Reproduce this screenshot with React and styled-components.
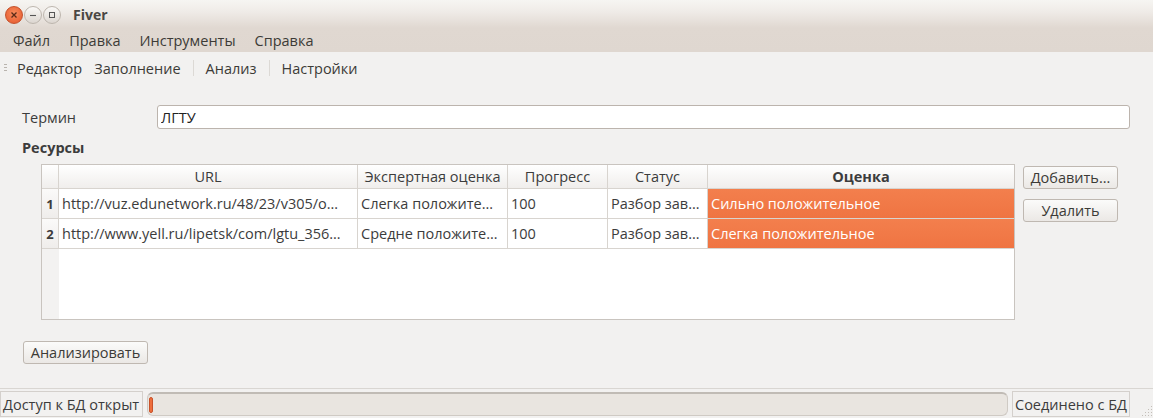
import React from 'react';
import styled, { createGlobalStyle } from 'styled-components';

const GlobalStyle = createGlobalStyle`
  html, body { margin: 0; padding: 0; background: #f2f1f0; }
  body { font-family: 'Open Sans', 'DejaVu Sans', sans-serif; font-size: 14.5px; color: #3c3c3c; }
`;

const columns = [
    { title: 'URL' },
    { title: 'Экспертная оценка' },
    { title: 'Прогресс' },
    { title: 'Статус' },
    { title: 'Оценка', bold: true },
];

const rows = [
    ['http://vuz.edunetwork.ru/48/23/v305/o…', 'Слегка положите…', '100', 'Разбор зав…', 'Сильно положительное'],
    ['http://www.yell.ru/lipetsk/com/lgtu_356…', 'Средне положите…', '100', 'Разбор зав…', 'Слегка положительное'],
];

// dots of the window size grip, a triangle in the corner
const gripDots = [[10, 1], [7, 4], [10, 4], [4, 7], [7, 7], [10, 7], [1, 10], [4, 10], [7, 10], [10, 10]];

const App = () => {
    return (
        <Window>
            <GlobalStyle />
            <Header>
                <TitleBar>
                    <WinButtons>
                        <WinButton $close>
                            <svg width="8" height="8" viewBox="0 0 8 8">
                                <path d="M1.5 1.5 L6.5 6.5 M6.5 1.5 L1.5 6.5" stroke="#5a2a18" strokeWidth="1.3" />
                            </svg>
                        </WinButton>
                        <WinButton>
                            <svg width="8" height="8" viewBox="0 0 8 8">
                                <path d="M1 4.5 H7" stroke="#555" strokeWidth="1.1" />
                            </svg>
                        </WinButton>
                        <WinButton>
                            <svg width="8" height="8" viewBox="0 0 8 8">
                                <rect x="1.5" y="1.5" width="5" height="5" fill="none" stroke="#555" strokeWidth="1" />
                            </svg>
                        </WinButton>
                    </WinButtons>
                    <Title>Fiver</Title>
                </TitleBar>
                <MenuBar>
                    <MenuItem>Файл</MenuItem>
                    <MenuItem>Правка</MenuItem>
                    <MenuItem>Инструменты</MenuItem>
                    <MenuItem>Справка</MenuItem>
                </MenuBar>
            </Header>
            <ToolBar>
                <Grip />
                <Tab>Редактор</Tab>
                <Tab>Заполнение</Tab>
                <ToolSep />
                <Tab>Анализ</Tab>
                <ToolSep />
                <Tab>Настройки</Tab>
            </ToolBar>
            <Content>
                <FormRow>
                    <Label>Термин</Label>
                    <Input defaultValue="ЛГТУ" />
                </FormRow>
                <SectionTitle>Ресурсы</SectionTitle>
                <ResourcesRow>
                    <Table>
                        <HeadCell />
                        {columns.map(c => (
                            <HeadCell key={c.title} $bold={c.bold}>{c.title}</HeadCell>
                        ))}
                        {rows.map((r, i) => (
                            <React.Fragment key={i}>
                                <RowNum>{i + 1}</RowNum>
                                {r.map((v, j) => (
                                    <Cell key={j} $hot={j === 4}>{v}</Cell>
                                ))}
                            </React.Fragment>
                        ))}
                        <FillerNum />
                        <Filler />
                    </Table>
                    <ButtonColumn>
                        <Button>Добавить...</Button>
                        <Button>Удалить</Button>
                    </ButtonColumn>
                </ResourcesRow>
                <AnalyzeRow>
                    <Button $wide>Анализировать</Button>
                </AnalyzeRow>
            </Content>
            <StatusBar>
                <StatusLabel $w={143}>Доступ к БД открыт</StatusLabel>
                <Progress>
                    <Chunk />
                </Progress>
                <StatusLabel $w={118}>Соединено с БД</StatusLabel>
                <SizeGrip>
                    <svg width="12" height="12" viewBox="0 0 12 12">
                        {gripDots.map(([x, y]) => (
                            <rect key={x + '-' + y} x={x} y={y} width="1" height="1" fill="#c3beb8" />
                        ))}
                    </svg>
                </SizeGrip>
            </StatusBar>
        </Window>
    );
};

const Window = styled.div`
    width: 1153px;
    height: 418px;
    display: flex;
    flex-direction: column;
    background: #f2f1f0;
    overflow: hidden;
`;

const Header = styled.div`
    height: 52px;
    display: flex;
    flex-direction: column;
    background: linear-gradient(to bottom, #f6f5f2 0px, #efebe7 12px, #e0d8d1 28px, #dfd7d0 52px);
`;

const TitleBar = styled.div`
    height: 29px;
    display: flex;
    align-items: center;
    padding-left: 5px;
`;

const WinButtons = styled.div`
    display: flex;
    gap: 1px;
    width: 68px;
`;

const WinButton = styled.div`
    width: 18px;
    height: 18px;
    border-radius: 50%;
    display: flex;
    align-items: center;
    justify-content: center;
    box-sizing: border-box;
    background: ${p => p.$close
        ? 'radial-gradient(circle at 50% 40%, #f78c5c, #e5552a)'
        : 'linear-gradient(to bottom, #faf9f7, #dcd6d0)'};
    border: 1px solid ${p => p.$close ? '#c4502a' : '#bdb6ae'};
`;

const Title = styled.div`
    font-weight: bold;
    font-size: 14px;
    color: #4a4743;
`;

const MenuBar = styled.div`
    height: 23px;
    display: flex;
    align-items: center;
    padding-left: 3px;
`;

const MenuItem = styled.div`
    padding: 0 9px 0 10px;
    color: #3c3b37;
`;

const ToolBar = styled.div`
    height: 32px;
    display: flex;
    align-items: center;
    padding-left: 4px;
`;

const Grip = styled.div`
    width: 3px;
    height: 9px;
    margin-right: 10px;
    background: repeating-linear-gradient(to bottom, #b9b4ae 0 1px, transparent 1px 3px);
`;

const Tab = styled.div`
    margin-right: 12px;
    color: #3c3b37;
`;

const ToolSep = styled.div`
    width: 1px;
    height: 16px;
    background: #dcd9d5;
    margin-right: 12px;
`;

const Content = styled.div`
    flex: 1;
    display: flex;
    flex-direction: column;
    padding: 21px 23px 0 22px;
`;

const FormRow = styled.div`
    display: flex;
    align-items: center;
    height: 24px;
`;

const Label = styled.div`
    width: 135px;
`;

const Input = styled.input`
    flex: 1;
    height: 24px;
    box-sizing: border-box;
    border: 1px solid #bcb4ad;
    border-radius: 3px;
    background: #fff;
    padding: 0 3px;
    font: inherit;
    color: #222;
    outline: none;
`;

const SectionTitle = styled.div`
    font-weight: bold;
    margin-top: 9px;
    height: 20px;
    line-height: 20px;
`;

const ResourcesRow = styled.div`
    display: flex;
    align-items: flex-start;
    margin-top: 6px;
    padding-left: 19px;
`;

const Table = styled.div`
    width: 974px;
    height: 156px;
    box-sizing: border-box;
    border: 1px solid #c9c4bf;
    display: grid;
    grid-template-columns: 17px 299px 150px 100px 100px 1fr;
    grid-template-rows: 24px 30px 30px 1fr;
    background: #fff;
`;

const HeadCell = styled.div`
    background: linear-gradient(to bottom, #ffffff, #f0eeec);
    border-right: 1px solid #d8d4cf;
    border-bottom: 1px solid #d8d4cf;
    display: flex;
    align-items: center;
    justify-content: center;
    font-weight: ${p => p.$bold ? 'bold' : 'normal'};
    white-space: nowrap;
    overflow: hidden;
    &:nth-child(6) { border-right: none; }
`;

const RowNum = styled.div`
    background: linear-gradient(to bottom, #fbfaf9, #efedeb);
    border-right: 1px solid #d8d4cf;
    border-bottom: 1px solid #d8d4cf;
    font-weight: bold;
    display: flex;
    align-items: center;
    justify-content: center;
    font-size: 13px;
`;

const Cell = styled.div`
    border-right: 1px solid #d8d4cf;
    border-bottom: 1px solid #d8d4cf;
    display: flex;
    align-items: center;
    padding-left: 3px;
    white-space: nowrap;
    overflow: hidden;
    color: ${p => p.$hot ? '#fff' : '#3c3c3c'};
    background: ${p => p.$hot ? 'linear-gradient(to bottom, #f37f4d, #ef7442)' : '#fff'};
    &:nth-child(6n) { border-right: none; }
`;

const FillerNum = styled.div`
    background: #f3f2f1;
`;

const Filler = styled.div`
    grid-column: 2 / -1;
    background: #fff;
`;

const ButtonColumn = styled.div`
    display: flex;
    flex-direction: column;
    gap: 10px;
    margin-left: 8px;
    margin-top: 2px;
`;

const Button = styled.button`
    width: ${p => p.$wide ? '125px' : '95px'};
    height: 23px;
    box-sizing: border-box;
    border: 1px solid #bfb8b1;
    border-radius: 3px;
    background: linear-gradient(to bottom, #fbfbfa, #ebe8e5);
    font: inherit;
    color: #3c3b37;
    padding: 0;
`;

const AnalyzeRow = styled.div`
    margin-top: 21px;
    padding-left: 1px;
`;

const StatusBar = styled.div`
    height: 30px;
    box-sizing: border-box;
    border-top: 1px solid #d9d6d2;
    display: flex;
    align-items: center;
    gap: 4px;
    padding-top: 1px;
`;

const StatusLabel = styled.div`
    width: ${p => p.$w}px;
    flex-shrink: 0;
    height: 26px;
    box-sizing: border-box;
    border: 1px solid #d4d0cc;
    display: flex;
    align-items: center;
    padding: 0 2px;
    white-space: nowrap;
    overflow: hidden;
`;

const Progress = styled.div`
    flex: 1;
    height: 24px;
    box-sizing: border-box;
    border: 1px solid #cfcac4;
    border-top: 2px solid #c0bbb5;
    border-radius: 6px;
    background: #e9e5e0;
    display: flex;
    align-items: center;
    padding-left: 1px;
`;

const Chunk = styled.div`
    width: 4px;
    height: 16px;
    border-radius: 2px;
    background: #ee6e3c;
    border: 1px solid #c9522a;
    box-sizing: border-box;
`;

const SizeGrip = styled.div`
    width: 19px;
    height: 12px;
    align-self: flex-end;
    margin-bottom: 1px;
    display: flex;
    justify-content: flex-end;
`;

export default App;
